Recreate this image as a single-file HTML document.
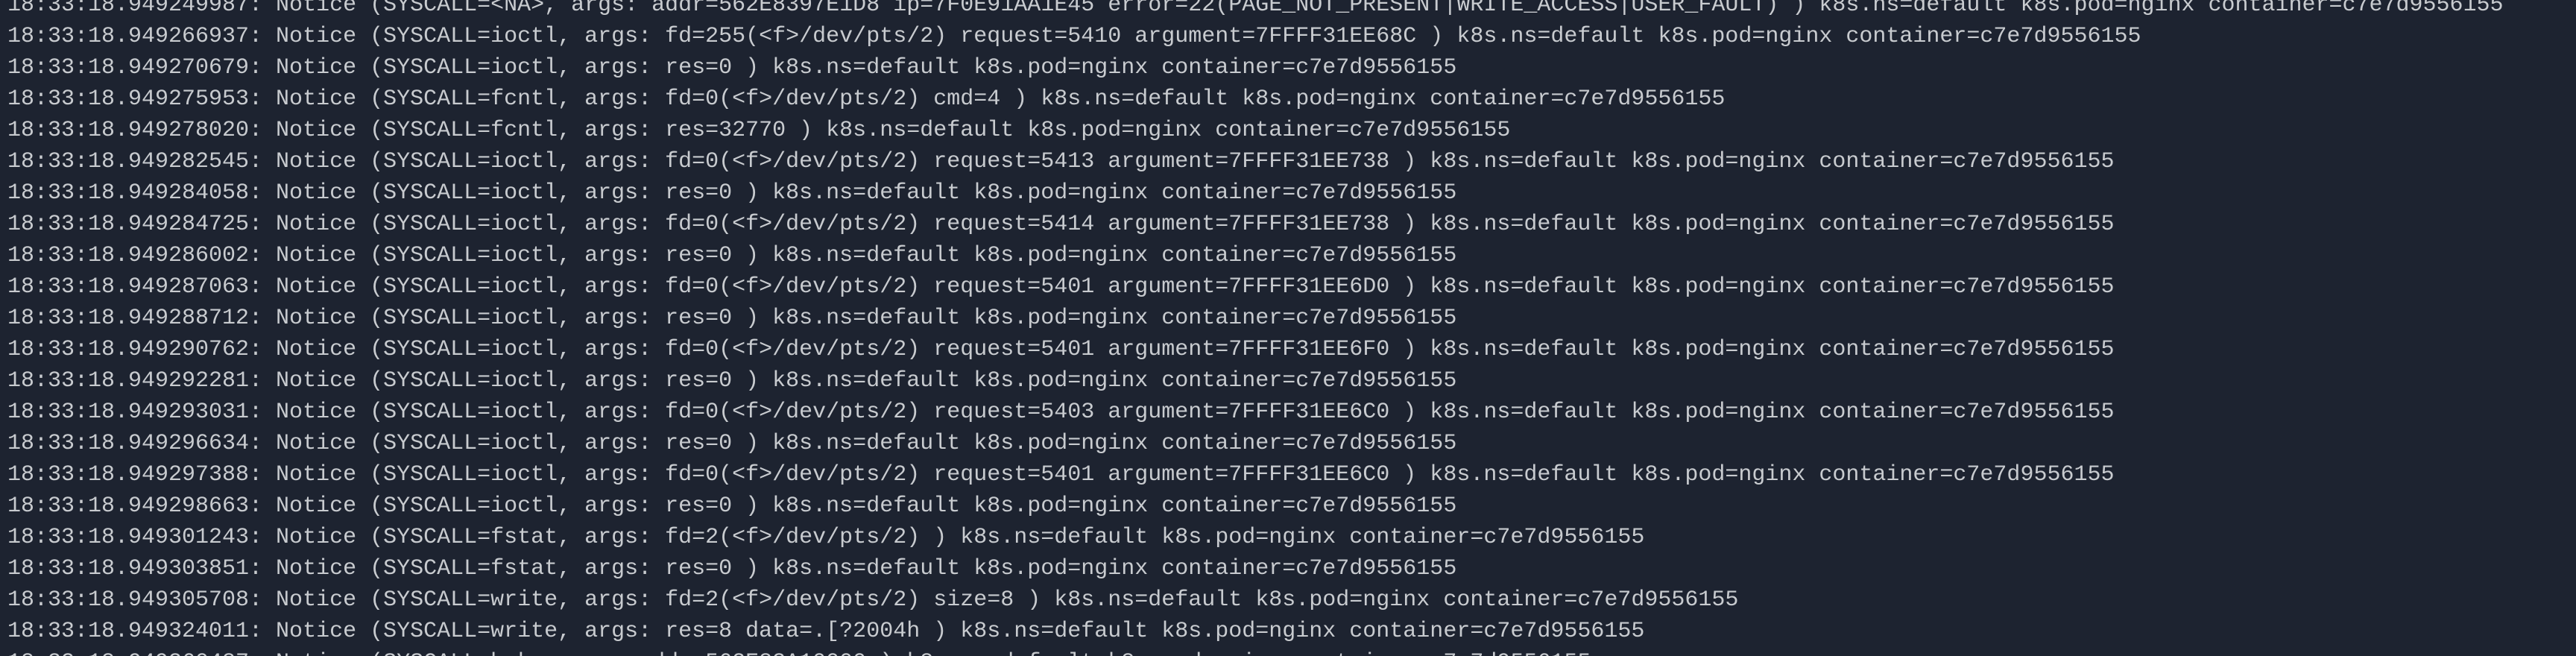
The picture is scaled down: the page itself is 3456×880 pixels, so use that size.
<!DOCTYPE html>
<html><head><meta charset="utf-8"><style>
html,body{margin:0;padding:0;background:#1d2330;width:3456px;height:880px;overflow:hidden}
#w{position:relative;width:3456px;height:880px;overflow:hidden}
pre{margin:0;position:absolute;left:10px;top:-14px;font-family:"Liberation Mono","DejaVu Sans Mono",monospace;font-size:30px;line-height:42px;color:#c8cbcf;white-space:pre}
</style></head><body><div id="w"><pre>18:33:18.949249987: Notice (SYSCALL=&lt;NA&gt;, args: addr=562E8397E1D8 ip=7F0E91AA1E45 error=22(PAGE_NOT_PRESENT|WRITE_ACCESS|USER_FAULT) ) k8s.ns=default k8s.pod=nginx container=c7e7d9556155
18:33:18.949266937: Notice (SYSCALL=ioctl, args: fd=255(&lt;f&gt;/dev/pts/2) request=5410 argument=7FFFF31EE68C ) k8s.ns=default k8s.pod=nginx container=c7e7d9556155
18:33:18.949270679: Notice (SYSCALL=ioctl, args: res=0 ) k8s.ns=default k8s.pod=nginx container=c7e7d9556155
18:33:18.949275953: Notice (SYSCALL=fcntl, args: fd=0(&lt;f&gt;/dev/pts/2) cmd=4 ) k8s.ns=default k8s.pod=nginx container=c7e7d9556155
18:33:18.949278020: Notice (SYSCALL=fcntl, args: res=32770 ) k8s.ns=default k8s.pod=nginx container=c7e7d9556155
18:33:18.949282545: Notice (SYSCALL=ioctl, args: fd=0(&lt;f&gt;/dev/pts/2) request=5413 argument=7FFFF31EE738 ) k8s.ns=default k8s.pod=nginx container=c7e7d9556155
18:33:18.949284058: Notice (SYSCALL=ioctl, args: res=0 ) k8s.ns=default k8s.pod=nginx container=c7e7d9556155
18:33:18.949284725: Notice (SYSCALL=ioctl, args: fd=0(&lt;f&gt;/dev/pts/2) request=5414 argument=7FFFF31EE738 ) k8s.ns=default k8s.pod=nginx container=c7e7d9556155
18:33:18.949286002: Notice (SYSCALL=ioctl, args: res=0 ) k8s.ns=default k8s.pod=nginx container=c7e7d9556155
18:33:18.949287063: Notice (SYSCALL=ioctl, args: fd=0(&lt;f&gt;/dev/pts/2) request=5401 argument=7FFFF31EE6D0 ) k8s.ns=default k8s.pod=nginx container=c7e7d9556155
18:33:18.949288712: Notice (SYSCALL=ioctl, args: res=0 ) k8s.ns=default k8s.pod=nginx container=c7e7d9556155
18:33:18.949290762: Notice (SYSCALL=ioctl, args: fd=0(&lt;f&gt;/dev/pts/2) request=5401 argument=7FFFF31EE6F0 ) k8s.ns=default k8s.pod=nginx container=c7e7d9556155
18:33:18.949292281: Notice (SYSCALL=ioctl, args: res=0 ) k8s.ns=default k8s.pod=nginx container=c7e7d9556155
18:33:18.949293031: Notice (SYSCALL=ioctl, args: fd=0(&lt;f&gt;/dev/pts/2) request=5403 argument=7FFFF31EE6C0 ) k8s.ns=default k8s.pod=nginx container=c7e7d9556155
18:33:18.949296634: Notice (SYSCALL=ioctl, args: res=0 ) k8s.ns=default k8s.pod=nginx container=c7e7d9556155
18:33:18.949297388: Notice (SYSCALL=ioctl, args: fd=0(&lt;f&gt;/dev/pts/2) request=5401 argument=7FFFF31EE6C0 ) k8s.ns=default k8s.pod=nginx container=c7e7d9556155
18:33:18.949298663: Notice (SYSCALL=ioctl, args: res=0 ) k8s.ns=default k8s.pod=nginx container=c7e7d9556155
18:33:18.949301243: Notice (SYSCALL=fstat, args: fd=2(&lt;f&gt;/dev/pts/2) ) k8s.ns=default k8s.pod=nginx container=c7e7d9556155
18:33:18.949303851: Notice (SYSCALL=fstat, args: res=0 ) k8s.ns=default k8s.pod=nginx container=c7e7d9556155
18:33:18.949305708: Notice (SYSCALL=write, args: fd=2(&lt;f&gt;/dev/pts/2) size=8 ) k8s.ns=default k8s.pod=nginx container=c7e7d9556155
18:33:18.949324011: Notice (SYSCALL=write, args: res=8 data=.[?2004h ) k8s.ns=default k8s.pod=nginx container=c7e7d9556155
18:33:18.949360487: Notice (SYSCALL=brk, args: addr=562E83A10000 ) k8s.ns=default k8s.pod=nginx container=c7e7d9556155</pre></div></body></html>
